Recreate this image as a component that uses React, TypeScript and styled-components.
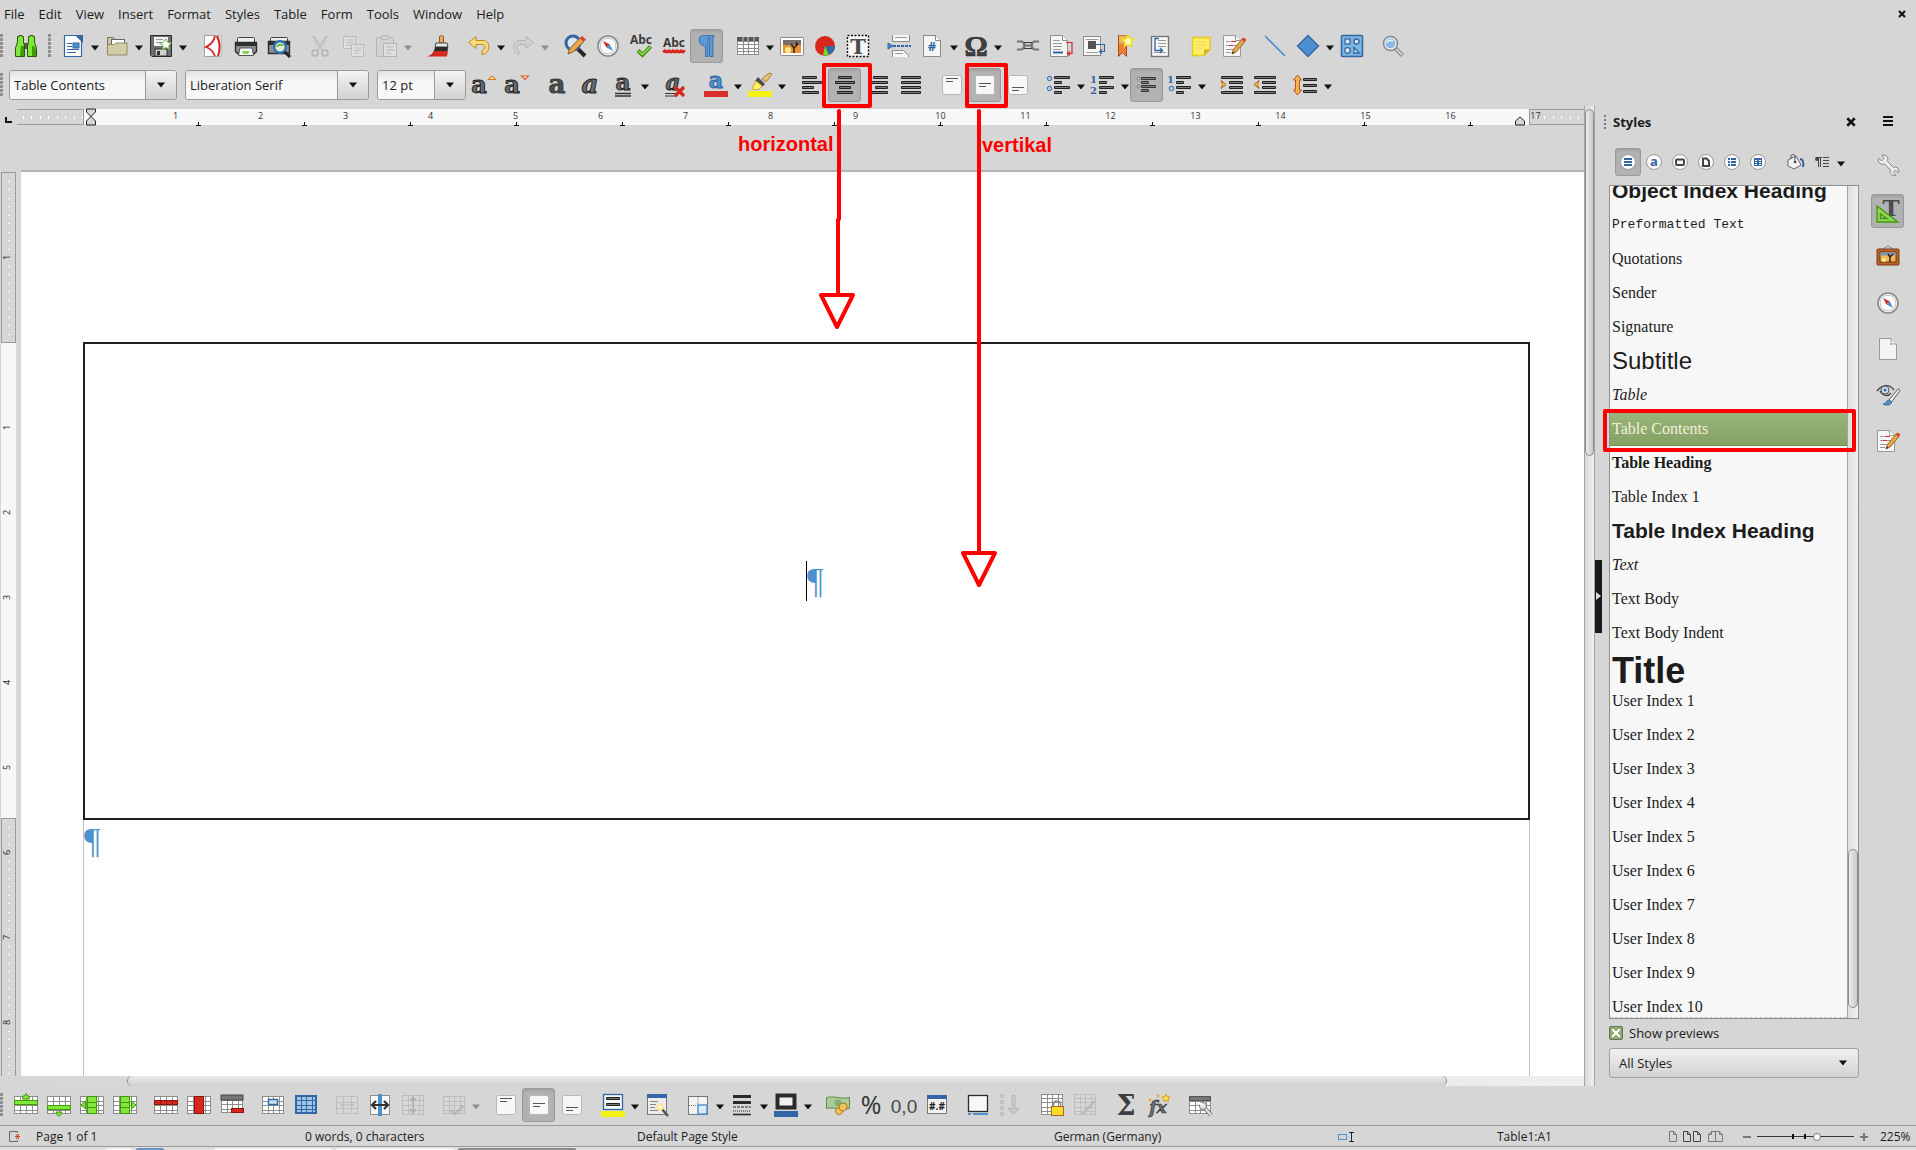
import React from 'react';
import styled, { createGlobalStyle, css } from 'styled-components';

const ui = '"Open Sans", "Noto Sans", sans-serif';
const INK = '#1c1c1c';
const BLUE = '#3465a4';
const SKY = '#4b91cf';

const Global = createGlobalStyle`
  * { box-sizing: border-box; }
  html, body { margin: 0; height: 100%; }
  body { background: #d6d6d6; color: ${INK}; font: 13px/18px ${ui}; overflow: hidden; }
  button, input, select { font: inherit; color: inherit; margin: 0; }
  svg { display: block; flex: none; overflow: visible; }
`;

/* ---------- icons ---------- */

type GridProps = { x?: number; y?: number; w?: number; h?: number; c?: number; r?: number; s?: string; f?: string };
const Grid = ({ x = 0, y = 3, w = 24, h = 18, c = 4, r = 4, s = '#8c8f8a', f = '#fff' }: GridProps) => (
  <g>
    <rect x={x + 0.5} y={y + 0.5} width={w - 1} height={h - 1} fill={f} stroke={s} />
    {Array.from({ length: c - 1 }, (_, i) => {
      const px = Math.round(x + ((i + 1) * w) / c) + 0.5;
      return <path key={'c' + i} d={`M${px} ${y}v${h}`} stroke={s} />;
    })}
    {Array.from({ length: r - 1 }, (_, i) => {
      const py = Math.round(y + ((i + 1) * h) / r) + 0.5;
      return <path key={'r' + i} d={`M${x} ${py}h${w}`} stroke={s} />;
    })}
  </g>
);

const Sheet = ({ x = 3, s = '#8a8a8a' }: { x?: number; s?: string }) => (
  <g>
    <path d={`M${x + 0.5} 1.5h12l5 5v16h-17z`} fill="#f6f6f6" stroke={s} />
    <path d={`M${x + 12.5} 1.5v5h5`} fill="#fff" stroke={s} />
  </g>
);

const Lines = ({ rows, y0 = 3, step = 5 }: { rows: [number, number][]; y0?: number; step?: number }) => (
  <g>
    {rows.map(([x, w], i) => (
      <g key={i}>
        <rect x={x} y={y0 + i * step} width={w} height="3" rx="1" fill="#1f2022" />
        <rect x={x + 1} y={y0 + i * step + 1} width={w - 2} height="1" fill="#77797a" />
      </g>
    ))}
  </g>
);

const VAlign = ({ y }: { y: number }) => (
  <g>
    <rect x="2.5" y="2.5" width="19" height="19" rx="2" fill="#f7f7f7" stroke="#b6b6b6" />
    <path d={`M6 ${y + 0.5}h12M6 ${y + 3.5}h7`} stroke="#555" />
  </g>
);

const Letter = ({ style, weight = 'bold', fill = '#6a6d6f', stroke = '#222', x = 12, y = 20, size = 26 }: {
  style?: string; weight?: string; fill?: string; stroke?: string; x?: number; y?: number; size?: number;
}) => (
  <text x={x} y={y} textAnchor="middle" fontFamily='"DejaVu Serif", serif' fontWeight={weight} fontStyle={style}
    fontSize={size} fill={fill} stroke={stroke} strokeWidth="1">a</text>
);

const Compass = () => (
  <g>
    <circle cx="12" cy="12" r="10" fill="#f4f4f4" stroke="#8a8a8a" strokeWidth="1.6" />
    <circle cx="12" cy="12" r="7.8" fill="#fff" stroke="#c4c4c4" />
    <path d="M7 7l7 3.4-3.6 3.2z" fill="#d32c2c" />
    <path d="M17 17l-6.6-3.4 3.6-3.2z" fill={SKY} />
  </g>
);

const Pencil = () => (
  <g>
    <path d="M10 20l1.5-4.5L20 5l3 2.5L14 18z" fill="#e9a850" stroke="#9a6320" />
    <path d="M19.5 5.5l2-2 3 2.2-2 2.2z" fill="#d8402c" />
    <path d="M10 20l.8-2.4 1.4 1.2z" fill="#222" />
  </g>
);

const TrackIcon = () => (
  <g>
    <Sheet x={1} s="#999" />
    <path d="M4 7.5h4M4 11.5h3M11 11.5h4M4 15.5h7M4 18.5h5" stroke="#999" />
    <path d="M9 7.5h5M7 11.5h4" stroke="#d8302c" />
    <Pencil />
  </g>
);

const Circle = ({ children }: { children: React.ReactNode }) => (
  <g>
    <circle cx="12" cy="12" r="7.5" fill="#fbfbfb" stroke="#9a9a9a" />
    {children}
  </g>
);

const GREEN = '#7fe83a';
const DGREEN = '#3f9a06';

const icons: Record<string, React.ReactNode> = {
  binoculars: (
    <g>
      <rect x="9" y="9" width="6" height="6" fill="#555" />
      <path d="M3.5 8V2.5H5v-1h3v1h1.5V8l1 4v10.500h-9V14z" fill={GREEN} stroke="#2c5a0c" />
      <path d="M14.500 8V2.500H16v-1h3v1h1.500V8l2 6v8.500h-9V12z" fill={GREEN} stroke="#2c5a0c" />
      <path d="M7 12h3v10H6zM18 12h2l2 4v6h-4z" fill={DGREEN} />
    </g>
  ),
  newdoc: (
    <g>
      <path d="M3.500 1.500h12l5 5v16h-17z" fill="#fff" stroke={BLUE} strokeWidth="1.200" />
      <path d="M14 1h8v8z" fill={BLUE} />
      <path d="M6 9.500h5M6 12.500h5M6 15.500h12M6 18.500h9" stroke={BLUE} />
      <rect x="12" y="9" width="6" height="5" fill={SKY} stroke={BLUE} />
    </g>
  ),
  open: (
    <g>
      <path d="M2.500 21V3.500h6l1.500 2h9V10" fill="#c9c6ae" stroke="#77755f" />
      <rect x="6.500" y="5.500" width="13" height="9" fill="#fff" stroke="#666" />
      <path d="M2.500 10.500h7l1.500-1.500h11v12h-19.500z" fill="#d3cda6" stroke="#8d8866" />
    </g>
  ),
  save: (
    <g>
      <path d="M1.500 1.500h21v21H3l-1.500-1.500z" fill="#6d7072" stroke="#26282a" />
      <rect x="5" y="3" width="14" height="9" fill="#f4f4f4" />
      <path d="M7 5.500h7M7 8.500h6" stroke="#999" />
      <rect x="6" y="15" width="12" height="7" fill="#cfcfcf" stroke="#333" />
      <rect x="8" y="17" width="3" height="4" fill="#333" />
      <path d="M17 5l1.800 3.400 3.700.6-2.700 2.600.6 3.800-3.400-1.800-3.400 1.800.6-3.800L10.500 9l3.700-.6z" fill="#fff" stroke="#6fa83c" />
    </g>
  ),
  pdf: (
    <g>
      <path d="M3.500 1.500h17v21h-17z" fill="#fdfdfd" stroke="#a0a0a0" />
      <path d="M14 1.500h6.500v21H18C19 14 18 8 14 1.500z" fill="#dcdcdc" />
      <path d="M14 2c-1 5-5 9-9 11 3 1 7 4 9 9" fill="none" stroke="#d6201c" strokeWidth="1.800" />
      <path d="M16 2c3 6 3 14 1 20" fill="none" stroke="#d6201c" strokeWidth="2" />
    </g>
  ),
  print: (
    <g>
      <rect x="3.500" y="3.500" width="17" height="6" rx="1" fill="#efefef" stroke="#444" />
      <path d="M1.500 8.500h21v9l-2 2h-17l-2-2z" fill="#8d9092" stroke="#2b2d2f" strokeWidth="1.400" />
      <path d="M2 9h20v3H2z" fill="#2f3133" />
      <path d="M6 14h12l1.500 7.500h-15z" fill="#fff" stroke="#555" />
      <path d="M8 17h8l-2 3H9z" fill="#87d55a" />
    </g>
  ),
  preview: (
    <g>
      <rect x="3.500" y="3.500" width="17" height="5" rx="1" fill="#efefef" stroke="#444" />
      <path d="M1.500 7.500h21v12h-21z" fill="#8d9092" stroke="#2b2d2f" strokeWidth="1.400" />
      <path d="M2 8h20v3H2z" fill="#2f3133" />
      <path d="M17 17l6 6" stroke="#222" strokeWidth="3" />
      <circle cx="13" cy="13" r="5.800" fill="#dff1d4" stroke="#2f6fb5" strokeWidth="2.400" />
      <path d="M10 13c1-3 5-3 6-1" stroke="#5faf35" strokeWidth="1.600" fill="none" />
    </g>
  ),
  cut: (
    <g fill="none" stroke="#b3b3b3" strokeWidth="1.600">
      <path d="M5 2l9 14M19 2l-9 14" strokeWidth="2.600" stroke="#c2c2c2" />
      <circle cx="7" cy="19" r="3" /><circle cx="17" cy="19" r="3" />
    </g>
  ),
  copy: (
    <g fill="#dedede" stroke="#bcbcbc">
      <rect x="2.500" y="2.500" width="12" height="12" /><path d="M5 6h7M5 8.500h7M5 11h5" />
      <rect x="10.500" y="10.500" width="12" height="12" /><path d="M13 14h7M13 16.500h7M13 19h5" />
    </g>
  ),
  paste: (
    <g fill="#d2d2d2" stroke="#b4b4b4">
      <rect x="2.500" y="3.500" width="17" height="19" rx="1" /><rect x="7.500" y="1.500" width="7" height="4" rx="1" />
      <rect x="9.500" y="9.500" width="13" height="13" fill="#e0e0e0" /><path d="M12 13h8M12 16h8M12 19h5" />
    </g>
  ),
  brush: (
    <g>
      <path d="M13.500 9V3c0-2 4-2 4 0v6z" fill="#e9ab5b" stroke="#8f5a1e" />
      <path d="M10 9h11l1 4H9z" fill="#e8e8e8" stroke="#444" />
      <path d="M9 13h13l-1 9H3c3-1 5-4 6-9z" fill="#2b2b2b" />
      <path d="M8 17h13.500l-.5 5.500H1c4-1 6-3 7-5.500z" fill="#d8281e" />
    </g>
  ),
  undo: <path d="M9 2.500v4h7c8 0 8 13-1 14v-4c4-1 4-6 0-6H9v4L1.500 8.500z" fill="#f9d978" stroke="#b98a1e" />,
  redo: <path d="M15 2.500v4H9c-8 0-9 12-1 14v-4c-3-1-3-6 1-6h6v4l7.500-6z" fill="#d0d0d0" stroke="#b4b4b4" />,
  find: (
    <g>
      <path d="M15 15l7 7" stroke="#2a2a2a" strokeWidth="4" />
      <circle cx="10" cy="9" r="7" fill="#dde6ee" stroke={BLUE} strokeWidth="3" />
      <path d="M5 20l1.500-5L17 4l4 3.500L10 18z" fill="#e9a850" stroke="#8f5a1e" />
      <path d="M17 4l2-2 4 3.500-2 2z" fill="#d8402c" />
    </g>
  ),
  compass: <Compass />,
  spell: (
    <g>
      <text x="12" y="10" textAnchor="middle" fontFamily={ui} fontWeight="bold" fontSize="12" fill="#3a3a3a">Abc</text>
      <path d="M9 16.500l4.500 4.500 8-8.500" stroke="#3f8f12" strokeWidth="4" fill="none" />
      <path d="M9.500 17l4 3.500 7.500-7.500" stroke="#8fe04a" strokeWidth="1.600" fill="none" />
    </g>
  ),
  autospell: (
    <g>
      <text x="12" y="13" textAnchor="middle" fontFamily={ui} fontWeight="bold" fontSize="12" fill="#3a3a3a">Abc</text>
      <path d="M1 18l2-1.500 2 1.500 2-1.500 2 1.500 2-1.500 2 1.500 2-1.500 2 1.500 2-1.500 2 1.500 2-1.500" stroke="#d8281e" strokeWidth="2.600" fill="none" />
    </g>
  ),
  pilcrow: (
    <path d="M7.500 1.500H19v2h-1v19h-3.500V4H13v18.500h-2.500V12c-8 0-8-10.500-3-10.500z" fill="#5a9bd4" stroke="#2c66a6" strokeWidth="0.800" />
  ),
  table: (
    <g><Grid x={1} w={22} c={4} r={5} /><rect x="1" y="3" width="22" height="4" fill="#55575a" /><path d="M7 3v4M12 3v4M18 3v4" stroke="#ccc" /></g>
  ),
  image: (
    <g>
      <rect x=".5" y="3.500" width="23" height="18" rx="1" fill="#fdfdfd" stroke="#888" />
      <rect x="3" y="6" width="18" height="13" fill="#e2953c" />
      <rect x="3" y="6" width="18" height="5" fill="#77706c" />
      <circle cx="8" cy="16" r="3" fill="#ffe88a" />
      <path d="M14 19v-5l-3-4M14 14l4-4M16 12l1-4" stroke="#2f1a0a" strokeWidth="1.400" fill="none" />
    </g>
  ),
  chart: (
    <g>
      <circle cx="12" cy="12" r="10" fill="#d8281e" />
      <path d="M12 12h10a10 10 0 01-6 9z" fill={BLUE} />
      <path d="M12 12l4 9.500h-6z" fill="#6fdc2a" />
    </g>
  ),
  textbox: (
    <g>
      <rect x="1.500" y="1.500" width="21" height="21" fill="#f7f7f7" stroke="#111" strokeWidth="1.400" strokeDasharray="2 1.500" />
      <text x="12" y="20" textAnchor="middle" fontFamily='"DejaVu Serif", serif' fontWeight="bold" fontSize="21" fill="#4a4c4e">T</text>
    </g>
  ),
  pagebreak: (
    <g>
      <path d="M5.500 1v6.500h17V1M5.500 23v-6.500h11l5 5V23" fill="#f7f7f7" stroke="#8a8a8a" />
      <path d="M8 3.500h12M8 19.500h8" stroke="#999" />
      <path d="M6 12h18" stroke={BLUE} strokeWidth="2" strokeDasharray="3 1" />
      <path d="M1 9l5 3-5 3z" fill={SKY} stroke={BLUE} />
    </g>
  ),
  field: (
    <g><Sheet /><text x="12" y="17" textAnchor="middle" fontFamily={ui} fontSize="13" fontWeight="bold" fill={BLUE}>#</text></g>
  ),
  omega: <text x="12" y="22" textAnchor="middle" fontFamily='"Liberation Serif", serif' fontWeight="bold" fontSize="29" fill="#3f4244" stroke="#222" strokeWidth=".6">Ω</text>,
  link: (
    <g fill="none" stroke="#707376" strokeWidth="2">
      <path d="M1 7.500h5l3 3M23 7.500h-5l-3 3M1 15.500h5l3-3M23 15.500h-5l-3-3M7 11.500h10" />
      <path d="M8 8.500h8M8 14.500h8" stroke="#3a3a3a" strokeWidth="1" />
    </g>
  ),
  footnote: (
    <g>
      <Sheet x={1} /><path d="M4 6.500h7M4 9.500h9M4 12.500h9M4 15.500h8" stroke="#999" />
      <path d="M4 18.500h10" stroke={BLUE} strokeWidth="2" />
      <path d="M17 8.500h6v11h-4m2-2l-2.500 2 2.500 2" fill="none" stroke="#d8281e" strokeWidth="1.200" />
    </g>
  ),
  endnote: (
    <g>
      <rect x="1.500" y="2.500" width="17" height="19" fill="#f7f7f7" stroke="#8a8a8a" />
      <rect x="6" y="7" width="8" height="8" fill="#555" /><path d="M4 5.500h12M4 18.500h12" stroke="#999" />
      <path d="M14 10.500h8.500v7H18m2-2l-2.500 2 2.500 2" fill="none" stroke={BLUE} strokeWidth="1.200" />
    </g>
  ),
  bookmark: (
    <g>
      <path d="M3.500 1.500h8v21l-4-4-4 4z" fill="#ea7f3a" stroke="#b0461c" />
      <path d="M4 1.500h9v8H4z" fill="#e8b75e" />
      <path d="M13 1l1.800 3.700 4.200.6-3 3 .7 4.200-3.700-2-3.700 2 .7-4.200-3-3 4.200-.6z" fill="#fffbb0" stroke="#f2dc14" strokeWidth="1.300" />
    </g>
  ),
  crossref: (
    <g>
      <rect x="3.500" y="2.500" width="17" height="20" fill="#f7f7f7" stroke="#77797b" strokeWidth="1.400" />
      <path d="M10 6.500h8M10 9.500h8M10 12.500h8M6 18.500h12" stroke="#999" />
      <path d="M11 4.500H7v12h7m-2-2.500l2.500 2.500-2.500 2.500" fill="none" stroke={BLUE} strokeWidth="1.400" />
    </g>
  ),
  comment: (
    <g>
      <path d="M3.500 3.500H21v12l-6 6H3.500z" fill="#fdee6a" stroke="#e8c81a" strokeWidth="1.400" />
      <path d="M15 21.500v-6h6z" fill="#d9a92a" />
      <path d="M6 8h12M6 11h12M6 14h8" stroke="#efd64a" />
    </g>
  ),
  track: <TrackIcon />,
  line: <path d="M2 2l20 20" stroke={SKY} strokeWidth="1.600" />,
  diamond: <path d="M12 1.500L22.500 12 12 22.500 1.500 12z" fill={SKY} stroke={BLUE} strokeWidth="1.300" />,
  shapes: (
    <g>
      <rect x="1.500" y="1.500" width="21" height="21" rx="1" fill="#7db4e0" stroke={BLUE} strokeWidth="1.500" />
      <g fill="#d8e9f6" stroke={BLUE} strokeWidth="1.300">
        <rect x="5" y="5" width="5" height="5" /><circle cx="16.500" cy="7.500" r="2.500" />
        <circle cx="7.500" cy="16.500" r="2.800" /><path d="M14 13.500l5.500 5.500H14z" />
      </g>
    </g>
  ),
  zoom: (
    <g>
      <path d="M14.500 14.500l7 7" stroke="#8a8a8a" strokeWidth="4" /><path d="M15 15l6 6" stroke="#e4e4e4" strokeWidth="1.600" />
      <circle cx="9.500" cy="9.500" r="7" fill="#eef4f9" stroke="#8a8a8a" strokeWidth="1.600" />
      <circle cx="9.500" cy="9.500" r="5" fill="#8bbbe3" />
      <path d="M6 9c1-3 4-3 6-2" stroke="#e8f3fb" strokeWidth="1.600" fill="none" />
    </g>
  ),
  grow: <g><Letter x={8} size={24} /><path d="M17.500 6.500L21 3l3.500 3.500z" fill="#fff3d8" stroke="#dd7a20" strokeWidth="1.100" /></g>,
  shrink: <g><Letter x={8} size={24} /><path d="M17.500 3L21 6.500 24.500 3z" fill="#fff3d8" stroke="#d65a2a" strokeWidth="1.100" /></g>,
  bold: <Letter fill="#4a4c4e" stroke="#3a3c3e" />,
  italic: <Letter style="italic" size={26} />,
  underline: <g><Letter y={17} size={23} /><path d="M4 20.500h16M4 23h16" stroke="#333" strokeWidth="1.300" /></g>,
  clear: (
    <g>
      <Letter style="italic" y={17} x={10} size={23} /><path d="M2 20.500h12M2 23h12" stroke="#333" />
      <path d="M12 14l9 9M21 14l-9 9" stroke="#d8281e" strokeWidth="3.200" />
    </g>
  ),
  fontcolor: <g><Letter y={15} size={22} fill={SKY} stroke={BLUE} /><rect x="0" y="18" width="24" height="6" fill="#d8302c" /></g>,
  highlight: (
    <g>
      <path d="M14 6l7-6 3 1-6 8z" fill="#e9c27a" stroke="#a87f30" />
      <path d="M10 4l7 7-3 3-7-6z" fill="#4a4c4e" /><path d="M8 8l6 5-4 4-6-1z" fill="#fff46a" stroke="#d8a51a" />
      <rect x="0" y="18" width="24" height="6" fill="#f7f215" />
    </g>
  ),
  left: <Lines rows={[[2, 15], [2, 20], [2, 12], [2, 17]]} />,
  center: <Lines rows={[[5, 14], [2, 20], [6, 12], [4, 16]]} />,
  right: <Lines rows={[[7, 15], [2, 20], [9, 13], [5, 17]]} />,
  justify: <Lines rows={[[2, 20], [2, 20], [2, 20], [2, 20]]} />,
  vtop: <VAlign y={5} />,
  vmid: <VAlign y={10} />,
  vbot: <VAlign y={14} />,
  bullets: (
    <g>
      <Lines rows={[[7, 16], [7, 8], [7, 16], [7, 8]]} />
      <circle cx="2.500" cy="5.500" r="2.200" fill="#a9cdea" stroke={BLUE} /><circle cx="2.500" cy="15.500" r="2.200" fill="#a9cdea" stroke={BLUE} />
    </g>
  ),
  numbers: (
    <g>
      <Lines rows={[[8, 15], [8, 8], [8, 15], [8, 8]]} />
      <g fontFamily='"DejaVu Serif", serif' fontWeight="bold" fontSize="10" fill={BLUE}><text x="-1" y="10">1</text><text x="-1" y="21">2</text></g>
    </g>
  ),
  nolist: (
    <g opacity=".85">
      <Lines rows={[[6, 15], [6, 8], [6, 15], [6, 8]]} y0={4} step={4} />
      <circle cx="3.500" cy="5.500" r="1.500" fill="#ccc" stroke="#777" /><circle cx="3.500" cy="13.500" r="1.500" fill="#ccc" stroke="#777" />
    </g>
  ),
  outline: (
    <g>
      <Lines rows={[[8, 15], [8, 8], [8, 15], [8, 8]]} />
      <text x="-1" y="10" fontFamily='"DejaVu Serif", serif' fontWeight="bold" fontSize="10" fill={BLUE}>1</text>
      <circle cx="3.500" cy="15.500" r="2.300" fill="#a9cdea" stroke={BLUE} />
    </g>
  ),
  indent: <g><Lines rows={[[1, 22], [9, 14], [9, 14], [1, 22]]} /><path d="M1 7.500l5 4-5 4 1.500-4z" fill="#f0b556" stroke="#b8661c" /></g>,
  outdent: <g><Lines rows={[[1, 22], [9, 14], [9, 14], [1, 22]]} /><path d="M6 7.500l-5 4 5 4-1.500-4z" fill="#f0b556" stroke="#b8661c" /></g>,
  spacing: (
    <g>
      <Lines rows={[[9, 14], [9, 14], [9, 14]]} y0={5} step={6} />
      <path d="M3.500 2l4 5h-2v10h2l-4 5-4-5h2V7h-2z" fill="#f0b556" stroke="#c8501c" />
    </g>
  ),
  rowAbove: <g><Grid /><rect x=".5" y="7.500" width="23" height="4" fill={GREEN} stroke={DGREEN} /><path d="M8.500 6l.5-3h1.500L12 .5 13.500 3H15l.5 3z" fill={GREEN} stroke={DGREEN} /></g>,
  rowBelow: <g><Grid /><rect x=".5" y="12.500" width="23" height="4" fill={GREEN} stroke={DGREEN} /><path d="M9 19h6l-1 2.500-2 2-2-2z" fill={GREEN} stroke={DGREEN} /></g>,
  colBefore: <g><Grid /><rect x="7.500" y="3.500" width="9" height="17" fill={GREEN} stroke={DGREEN} /><path d="M8 9.500h8M8 14.500h8" stroke={DGREEN} /><path d="M5.500 8v8L1 12z" fill={GREEN} stroke={DGREEN} /></g>,
  colAfter: <g><Grid /><rect x="7.500" y="3.500" width="9" height="17" fill={GREEN} stroke={DGREEN} /><path d="M8 9.500h8M8 14.500h8" stroke={DGREEN} /><path d="M18.500 8v8l4.500-4z" fill={GREEN} stroke={DGREEN} /></g>,
  delRow: <g><Grid /><rect x=".5" y="7.500" width="23" height="4" fill="#d8281e" stroke="#8d1510" /><path d="M6.500 7v5M12.500 7v5M18.500 7v5" stroke="#8d1510" /></g>,
  delCol: <g><Grid /><rect x="7.500" y="3.500" width="9" height="17" fill="#d8281e" stroke="#8d1510" /></g>,
  delTable: <g><Grid x={1} w={22} y={2} /><rect x="1" y="2" width="22" height="5" fill="#77777c" stroke="#444" /><rect x="11.500" y="15.500" width="12" height="4" fill="#d8281e" stroke="#8d1510" /></g>,
  selCell: <g><Grid x={1} w={22} /><rect x="7.500" y="6.500" width="9" height="5" fill="#c7def1" stroke={BLUE} strokeWidth="1.400" /></g>,
  selTable: <g><Grid x={1} w={22} y={2} h={19} s={BLUE} f="#9cc6e8" /><rect x="2" y="3" width="20" height="17" fill="none" stroke={BLUE} strokeWidth="2" /></g>,
  merge: <g opacity=".7"><Grid x={1} w={22} s="#b4b4b4" f="#dadada" c={3} r={3} /><path d="M6 12h12M8 9.500L5.500 12 8 14.500M16 9.500l2.500 2.500-2.500 2.500" stroke="#aaa" fill="none" /></g>,
  splitCells: (
    <g>
      <path d="M2 2.500h20M2 21.500h20M2.500 2v20M21.500 2v20" stroke="#8c8f8a" />
      <rect x="3" y="3" width="18" height="18" fill="#f7f7f7" /><rect x="10" y="1" width="4" height="22" fill={SKY} />
      <path d="M4 12h16M8 8l-4 4 4 4M16 8l4 4-4 4" stroke="#333" strokeWidth="2.200" fill="none" />
    </g>
  ),
  splitTable: <g opacity=".7"><Grid x={1} w={22} y={2} h={20} s="#b4b4b4" f="#dadada" /><path d="M12 5v14M9 8l3-4 3 4M9 16l3 4 3-4" stroke="#a0a0a0" strokeWidth="1.600" fill="none" /></g>,
  optimize: <g opacity=".7"><Grid x={1} w={22} s="#b4b4b4" f="#dadada" /><path d="M9 17l4 4 8-8" stroke="#aaa" strokeWidth="2.600" fill="none" /></g>,
  shading: (
    <g>
      <rect x="2.500" y="1.500" width="19" height="15" fill="#f7f7f7" stroke={BLUE} strokeWidth="1.300" />
      <Lines rows={[[5, 14], [5, 14]]} y0={4} step={6} /><rect x="0" y="18" width="24" height="6" fill="#f7f215" />
    </g>
  ),
  autoformat: (
    <g>
      <rect x="2.500" y="1.500" width="19" height="20" fill="#ececec" stroke="#777" /><rect x="2" y="1" width="20" height="4" fill={BLUE} />
      <path d="M5 8.500h8M5 11.500h6M5 14.500h5M5 17.500h8" stroke="#888" /><path d="M16 15l7 8" stroke="#555" strokeWidth="2.600" />
      <circle cx="15" cy="14" r="3.600" fill="#fbe48a" /><circle cx="15" cy="14" r="1.800" fill="#fff" />
    </g>
  ),
  borders: (
    <g>
      <rect x="2.500" y="3.500" width="19" height="18" fill="#f3f3f3" stroke="#777" /><path d="M12 4v8M3 12.500h9" stroke="#777" strokeDasharray="1 1" />
      <rect x="12" y="12" width="9" height="9" fill="#dcebf7" stroke={SKY} strokeWidth="1.400" />
    </g>
  ),
  linestyle: <g stroke="#2a2a2a"><path d="M3 3.500h18M3 9.500h18" strokeWidth="3" /><path d="M3 14h18" strokeDasharray="3 1" /><path d="M3 18h18" strokeDasharray="1 1" /><path d="M3 21.500h18" strokeWidth="1.600" /></g>,
  bordercolor: <g><rect x="3.500" y="2.500" width="17" height="12" fill="#f0f0f0" stroke="#2a2a2a" strokeWidth="4" /><rect x="0" y="18" width="24" height="6" fill={BLUE} /></g>,
  currency: (
    <g>
      <path d="M.5 4.500c8-2 14 2 23 0v11c-9 2-15-2-23 0z" fill="#a9cc98" stroke="#618a50" /><circle cx="12" cy="10" r="3.500" fill="#86b073" />
      <circle cx="13" cy="18" r="3.500" fill="#f3c35c" stroke="#b07a1c" /><circle cx="17" cy="14" r="4" fill="#f3c35c" stroke="#b07a1c" />
    </g>
  ),
  percent: <text x="12" y="21" textAnchor="middle" fontFamily='"Open Sans", sans-serif' fontSize="25" fill="#333">%</text>,
  decimal: <text x="12" y="20" textAnchor="middle" fontFamily='"Liberation Sans", sans-serif' fontSize="19" fill="#4a4a4a">0,0</text>,
  numfmt: (
    <g>
      <rect x="2.500" y="2.500" width="19" height="18" fill="#f3f3f3" stroke="#777" /><rect x="2" y="2" width="20" height="4" fill={BLUE} />
      <text x="12" y="17" textAnchor="middle" fontFamily={ui} fontWeight="bold" fontSize="10" fill="#222">#.#</text>
    </g>
  ),
  caption: <g><rect x="2.500" y="2.500" width="19" height="16" fill="#f7f7f7" stroke="#2a2a2a" strokeWidth="1.300" /><path d="M2 21h3M7 21h15" stroke={SKY} strokeWidth="2" /></g>,
  sort: (
    <g fill="none" stroke="#b4b4b4">
      <circle cx="3" cy="3" r="1.600" /><circle cx="3" cy="9" r="1.600" /><circle cx="3" cy="15" r="1.600" /><circle cx="3" cy="21" r="1.600" />
      <path d="M13 2.500h3v13h4l-5.500 6-5.500-6h4z" fill="#cacaca" />
    </g>
  ),
  protect: (
    <g>
      <Grid x={1} w={22} y={1} h={21} r={5} /><path d="M13.500 14v-3c0-4 7-4 7 0v3" fill="none" stroke="#888" strokeWidth="1.600" />
      <rect x="11.500" y="13.500" width="12" height="9" fill="#f7dc2a" stroke="#b9641c" />
    </g>
  ),
  unprotect: <g opacity=".7"><Grid x={1} w={22} y={1} h={21} r={5} s="#b4b4b4" f="#dadada" /><path d="M9 21l13-13" stroke="#b0b0b0" strokeWidth="3" /></g>,
  sum: <text x="12" y="22" textAnchor="middle" fontFamily='"DejaVu Serif", serif' fontWeight="bold" fontSize="27" fill="#3c3e40">Σ</text>,
  formula: (
    <g>
      <text x="11" y="20" textAnchor="middle" fontFamily='"DejaVu Serif", serif' fontStyle="italic" fontWeight="bold" fontSize="17" fill="#6a6d6f" stroke="#333" strokeWidth=".6">fx</text>
      <path d="M3 5l1.500 2L3 9 1.500 7zM11 1l1.500 2-1.500 2-1.500-2z" fill="#f3a21c" /><path d="M19 1l1 2.500 3 .5-2 2 .5 2.500-2.500-1-2.500 1 .5-2.500-2-2 3-.5z" fill="#fbe04a" stroke="#e39a1c" />
    </g>
  ),
  tableprops: (
    <g>
      <Grid x={1} w={22} y={3} /><rect x="1.500" y="3.500" width="21" height="4" fill="#77777c" stroke="#555" />
      <path d="M16 14l7 8" stroke="#777" strokeWidth="4" /><path d="M16 14l7 8" stroke="#e6e6e6" strokeWidth="2" /><circle cx="15" cy="13" r="3.500" fill="#e6e6e6" stroke="#777" /><path d="M12 10l3 3" stroke="#fff" strokeWidth="2" />
    </g>
  ),
  wrench: (
    <path d="M6 2c4-1 7 3 5.500 6.500l6 6C21 13 24 16 22.500 20l-3-3-2.500 2.500 3 3c-4 1-7-2-5.500-5.500l-6-6C5 12.500 1 9 2.500 5l3 3L8 5.500z" fill="#ececec" stroke="#858585" />
  ),
  stylesTab: (
    <g>
      <text x="15" y="17" textAnchor="middle" fontFamily='"DejaVu Serif", serif' fontWeight="bold" fontSize="23" fill="#4a4c4e">T</text>
      <path d="M1 7v16h21zM4.500 15v4.500H11z" fill="#8fd25e" fillRule="evenodd" stroke={DGREEN} strokeWidth="1.300" />
    </g>
  ),
  gallery: (
    <g>
      <path d="M7 4l5-3 5 3" fill="none" stroke="#888" /><rect x="1" y="4" width="22" height="16" rx="1" fill="#b8642c" stroke="#7a3a12" />
      <rect x="4" y="7" width="16" height="10" fill="#f0b95c" stroke="#6a3410" /><rect x="4.500" y="7.500" width="15" height="3" fill="#7a9cc0" />
      <path d="M14 17v-5l-2-3M14 12l3-3" stroke="#2f1a0a" strokeWidth="1.400" fill="none" /><circle cx="8" cy="15" r="2" fill="#ffe88a" />
    </g>
  ),
  page: (
    <g><path d="M3.500 1.500h11l6 6v15h-17z" fill="#f3f3f3" stroke="#9a9a9a" /><path d="M14.500 1.500c1 2 1 4 0 6 2-1 4-1 6 0" fill="#fff" stroke="#9a9a9a" /></g>
  ),
  inspector: (
    <g>
      <path d="M1 8c5-7 13-7 17-1M4 8c3 5 8 6 11 2" fill="none" stroke="#444" strokeWidth="1.400" /><circle cx="9" cy="7" r="4" fill="#cfe2f3" stroke="#555" /><circle cx="9" cy="7" r="1.500" fill={BLUE} />
      <path d="M22.500 5.500L13 17l2.500 2L24 7.500z" fill="#f3f3f3" stroke="#555" /><path d="M7 21c4 0 3-4 6-4l2.500 2c0 3-5 4-8.500 2z" fill={SKY} stroke={BLUE} />
    </g>
  ),
  sPara: <Circle><path d="M8 9h8M8 12h8M8 15h8" stroke={BLUE} strokeWidth="1.800" /></Circle>,
  sChar: <Circle><text x="12" y="16" textAnchor="middle" fontFamily={ui} fontWeight="bold" fontSize="13" fill={BLUE}>a</text></Circle>,
  sFrame: <Circle><rect x="8" y="9.500" width="8" height="5.500" rx="1" fill="none" stroke="#444" strokeWidth="2" /></Circle>,
  sPage: <Circle><path d="M9 8.500h3.500L15 11v5H9z" fill="none" stroke="#444" strokeWidth="2" /></Circle>,
  sList: <Circle><path d="M8 9h2M8 12h2M8 15h2M11 9h5M11 12h5M11 15h5" stroke={BLUE} strokeWidth="2" /></Circle>,
  sTable: <Circle><rect x="8" y="8" width="8" height="8" fill={BLUE} /><path d="M9 10.500h2M13 10.500h2M9 12.500h2M13 12.500h2M9 14.500h2M13 14.500h2" stroke="#fff" strokeWidth="1" /></Circle>,
  fill: (
    <g>
      <path d="M4 10l8-4 5 9-7 4-6-3z" fill="#f3f3f3" stroke="#666" /><path d="M7 9V6c0-2 4-2 4 0v5" fill="none" stroke="#555" />
      <circle cx="11" cy="12" r="1.300" fill="#444" /><path d="M16 9c3 0 4 4 3 8" fill="none" stroke={BLUE} strokeWidth="2" />
    </g>
  ),
  paraList: (
    <g stroke="#444"><path d="M13 7.500h6M13 10.500h6M13 13.500h6M13 16.500h6" strokeWidth="1.200" /><path d="M8.500 7v10M10.500 7v10M6 7.500h6" fill="none" /><circle cx="7" cy="9" r="2" fill="#444" stroke="none" /></g>
  ),
};

const Icon = ({ name, size = 24 }: { name: string; size?: number }) => (
  <svg width={size} height={size} viewBox="0 0 24 24" aria-hidden="true">{icons[name]}</svg>
);

const Caret = ({ color = '#111' }: { color?: string }) => (
  <svg width="10" height="6" viewBox="0 0 10 6" aria-hidden="true"><path d="M1 0.500h8L5 5.500z" fill={color} /></svg>
);

/* ---------- tool bars ---------- */

const Window = styled.div`
  display: flex;
  flex-direction: column;
  height: 100vh;
  position: relative;
`;

const MenuBar = styled.nav`
  display: flex;
  flex: none;
  gap: 14px;
  height: 28px;
  align-items: center;
  padding: 0 10px 0 4px;
`;

const MenuItem = styled.button`
  border: 0;
  padding: 0;
  background: none;
`;

const CloseButton = styled(MenuItem)`
  margin-left: auto;
`;

const Toolbar = styled.div<{ $h: number }>`
  display: flex;
  flex: none;
  align-items: center;
  height: ${p => p.$h}px;
  padding-bottom: 2px;
`;

const Grip = styled.span<{ $wide?: boolean }>`
  flex: none;
  width: 3px;
  height: 23px;
  margin-right: ${p => (p.$wide ? 6 : 7)}px;
  background: repeating-linear-gradient(#8f8f8f 0 3px, transparent 3px 4px);
`;

const MidGrip = styled(Grip)`
  margin: 0 5px 0 6px;
`;

const ToolButton = styled.button<{ $on?: boolean }>`
  display: flex;
  flex: none;
  align-items: center;
  justify-content: center;
  width: 33px;
  height: 34px;
  padding: 0;
  border: 1px solid transparent;
  border-radius: 3px;
  background: none;
  ${p => p.$on && css`
    border-color: #9a9a9a;
    background: #b2b2b2;
    box-shadow: inset 0 2px 2px #a4a4a4;
  `}
`;

const DropButton = styled.button`
  display: flex;
  flex: none;
  align-items: center;
  justify-content: center;
  width: 11px;
  height: 34px;
  padding: 4px 0 0;
  border: 0;
  background: none;
`;

const Space = styled.span`
  flex: none;
  width: 8px;
`;

type Tool = string;

/* "|" is a group gap; after a colon "v" adds a drop-down arrow, "x" a disabled one, "*" marks a pressed button. */
const Tools = ({ list }: { list: Tool[] }) => (
  <>
    {list.map((t, i) => {
      if (t === '|') return <Space key={i} />;
      const [name, flag = ''] = t.split(':');
      return (
        <React.Fragment key={i}>
          <ToolButton $on={flag.includes('*')} aria-pressed={flag.includes('*')} aria-label={name}><Icon name={name} /></ToolButton>
          {/[vx]/.test(flag) && (
            <DropButton aria-label={name + ' options'}><Caret color={flag.includes('x') ? '#8e8e8e' : '#111'} /></DropButton>
          )}
        </React.Fragment>
      );
    })}
  </>
);

const Combos = styled.div`
  display: flex;
  flex: none;
  gap: 8px;
`;

const Combo = styled.div<{ $w: number }>`
  display: flex;
  flex: none;
  width: ${p => p.$w}px;
  height: 30px;
  border: 1px solid #9a9a9a;
  border-radius: 3px;
  overflow: hidden;
`;

const ComboInput = styled.input`
  flex: 1;
  min-width: 0;
  border: 0;
  padding: 0 4px;
  background: linear-gradient(#e4e4e4, #f7f7f7 40%);
`;

const ComboArrow = styled.button`
  display: flex;
  align-items: center;
  justify-content: center;
  width: 31px;
  padding: 0;
  border: 0;
  border-left: 1px solid #9a9a9a;
  background: linear-gradient(#f4f4f4, #d2d2d2);
`;

/* ---------- editor ---------- */

const Main = styled.main`
  display: flex;
  flex: 1;
  min-height: 0;
`;

const Editor = styled.section`
  display: flex;
  flex: 1;
  flex-direction: column;
  min-width: 0;
`;

const RulerRow = styled.div`
  display: flex;
  flex: none;
  height: 64px;
  padding-top: 3px;
`;

const TabCorner = styled.button`
  width: 17px;
  height: 16px;
  border: 0;
  padding: 6px 0 0 5px;
  background: none;
`;

const Ruler = styled.div`
  position: relative;
  display: flex;
  flex: 1;
  height: 16px;
`;

const OutsideH = styled.div<{ $w: number; $end?: boolean }>`
  width: ${p => p.$w}px;
  border: 1px solid #9a9a9a;
  border-width: ${p => (p.$end ? '1px 0 1px 1px' : '1px 1px 1px 0')};
  background:
    repeating-linear-gradient(90deg, transparent 0 6px, #fff 6px 7px, transparent 7px 14px, #fff 14px 15px, transparent 15px 17px) center / 100% 3px no-repeat;
`;

const InsideH = styled.div`
  flex: 1;
  background: #f7f7f7;
`;

const Numbers = styled.div`
  position: absolute;
  inset: 0;
  display: flex;
  padding-left: 116px;
  overflow: hidden;
  font-size: 9px;
  line-height: 14px;
  color: #333;
`;

const NumberCell = styled.span`
  flex: none;
  width: 85px;
  text-align: center;
`;

const Stops = styled.svg`
  position: absolute;
  left: 67px;
  bottom: -1px;
`;

const Markers = styled.svg<{ $x: 'left' | 'right' }>`
  position: absolute;
  top: -1px;
  ${p => (p.$x === 'left' ? 'left: 69px;' : 'right: 59px;')}
`;

const Canvas = styled.div`
  display: flex;
  flex: 1;
  min-height: 0;
`;

const VRuler = styled.div`
  position: relative;
  display: flex;
  flex: none;
  flex-direction: column;
  width: 16px;
  margin: 2px 5px 0 0;
  padding-left: 1px;
`;

const OutsideV = styled.div<{ $h?: number }>`
  ${p => (p.$h ? `height: ${p.$h}px;` : 'flex: 1;')}
  border: 1px solid #9a9a9a;
  border-bottom-width: ${p => (p.$h ? 1 : 0)}px;
  background:
    repeating-linear-gradient(transparent 0 8px, #fff 8px 9px, transparent 9px 16px, #fff 16px 17px) center / 2px 100% no-repeat;
`;

const InsideV = styled.div`
  height: 475px;
  background: #f7f7f7;
`;

const NumbersV = styled.div`
  position: absolute;
  inset: 43px 0 0 0;
  overflow: hidden;
`;

const NumberCellV = styled.span`
  display: flex;
  align-items: center;
  justify-content: center;
  height: 85px;
  font-size: 9px;
  line-height: 14px;
  writing-mode: vertical-rl;
  transform: rotate(180deg);
`;

const Page = styled.article`
  display: flex;
  flex: 1;
  flex-direction: column;
  min-width: 0;
  padding: 170px 54px 0 62px;
  border-top: 2px solid #b4b4b4;
  background: #fff;
  font: 36px/40px "Liberation Serif", serif;
  color: ${SKY};
`;

const DocTable = styled.table`
  width: 100%;
  height: 478px;
  flex: none;
  border-collapse: collapse;
`;

const Cell = styled.td`
  padding: 0;
  border: 2px solid #1f1f1f;
  vertical-align: middle;
`;

const CenteredMark = styled.p`
  width: 1px;
  margin: 0 auto;
  white-space: nowrap;
  border-left: 1px solid #000;
`;

const TextArea = styled.div`
  flex: 1;
  border: solid #c2c2c2;
  border-width: 0 1px;
`;

const Mark = styled.p`
  margin: 0;
  line-height: 42px;
`;

const HScroll = styled.div`
  display: flex;
  flex: none;
  height: 10px;
  padding: 0 137px 0 106px;
  margin-left: 21px;
  background: linear-gradient(90deg, #d6d6d6, #eee);
`;

const HThumb = styled.div`
  flex: 1;
  border: 1px solid #8e8e8e;
  border-width: 0 1px;
  border-radius: 5px;
  background: linear-gradient(#eaeaea, #cfcfcf);
`;

const VScroll = styled.div`
  flex: none;
  width: 11px;
  padding-top: 3px;
  border: 1px solid #a4a4a4;
  border-width: 0 1px;
  background: linear-gradient(90deg, #d8d8d8, #f0f0f0);
`;

const VThumb = styled.div<{ $h: number }>`
  height: ${p => p.$h}px;
  border: 1px solid #8e8e8e;
  border-radius: 5px;
  background: linear-gradient(90deg, #ececec, #c9c9c9);
`;

/* ---------- side bar ---------- */

const Splitter = styled.div`
  display: flex;
  flex: none;
  align-items: center;
  width: 14px;
`;

const Handle = styled.button`
  display: flex;
  align-items: center;
  width: 7px;
  height: 73px;
  border: 0;
  padding: 0;
  background: #1a1a1a;
`;

const Panel = styled.aside`
  display: flex;
  flex: none;
  flex-direction: column;
  width: 250px;
  padding-bottom: 8px;
`;

const PanelHead = styled.header`
  display: flex;
  align-items: center;
  justify-content: space-between;
  height: 31px;
  padding: 0 3px 0 4px;
  position: relative;
`;

const PanelGrip = styled.span`
  position: absolute;
  left: -5px;
  width: 2px;
  height: 14px;
  background: repeating-linear-gradient(#777 0 2px, transparent 2px 4px);
`;

const PanelTitle = styled.h2`
  margin: 0;
  font-size: 13px;
  line-height: 18px;
`;

const StyleTools = styled.div`
  display: flex;
  align-items: center;
  height: 48px;
  padding: 2px 0 0 6px;
`;

const StyleTool = styled(ToolButton)`
  width: 26px;
  height: 28px;
`;

const StyleGap = styled.span`
  flex: none;
  width: 12px;
`;

const ListFrame = styled.div`
  display: flex;
  flex: 1;
  min-height: 0;
  border: 1px solid #8e8e8e;
  background: #f7f7f7;
`;

const StyleList = styled.ul`
  flex: 1;
  margin: 0;
  padding: 0;
  overflow: hidden;
  border-bottom: 1px dashed #c4c4c4;
  list-style: none;
`;

const faces = {
  serif: css`font: 16px/34px "Liberation Serif", serif;`,
  italic: css`font: italic 16px/34px "Liberation Serif", serif;`,
  strong: css`font: bold 16px/34px "Liberation Serif", serif;`,
  mono: css`font: 13px/34px "Liberation Mono", monospace;`,
  heading: css`font: bold 21px/34px "Liberation Sans", sans-serif;`,
  subtitle: css`font: 24px/34px "Liberation Sans", sans-serif;`,
  title: css`font: bold 36px/42px "Liberation Sans", sans-serif;`,
};

const StyleRow = styled.li<{ $face: keyof typeof faces; $on?: boolean }>`
  height: 34px;
  padding-left: 2px;
  white-space: nowrap;
  ${p => faces[p.$face]}
  &:first-child { margin-top: -12px; }
  ${p => p.$on && css`
    color: #f3efdc;
    border-bottom: 1px solid #71905a;
    background: linear-gradient(#9ab67b, #83a264);
  `}
`;

const ListScroll = styled.div`
  display: flex;
  flex-direction: column;
  justify-content: flex-end;
  width: 11px;
  padding-bottom: 10px;
  border-left: 1px solid #a4a4a4;
  background: linear-gradient(90deg, #dedede, #f0f0f0);
`;

const PreviewLabel = styled.label`
  display: flex;
  align-items: center;
  gap: 6px;
  height: 29px;
  padding-bottom: 2px;
`;

const Check = styled.input`
  appearance: none;
  width: 14px;
  height: 14px;
  border: 1px solid #5f6f50;
  border-radius: 2px;
  background:
    linear-gradient(45deg, transparent 42%, #fff 42% 58%, transparent 58%) center / 8px 8px no-repeat,
    linear-gradient(-45deg, transparent 42%, #fff 42% 58%, transparent 58%) center / 8px 8px no-repeat,
    #8fae70;
`;

const SelectBox = styled.div`
  display: grid;
  align-items: center;
  height: 30px;
  & > * { grid-area: 1 / 1; }
  svg { justify-self: end; margin-right: 11px; pointer-events: none; }
`;

const FilterSelect = styled.select`
  appearance: none;
  width: 100%;
  height: 30px;
  padding: 0 9px;
  border: 1px solid #a0a0a0;
  border-radius: 3px;
  background: linear-gradient(#f0f0f0, #d2d2d2);
`;

const TabRail = styled.nav`
  display: flex;
  flex: none;
  flex-direction: column;
  align-items: center;
  gap: 12px;
  width: 57px;
`;

const MenuButton = styled(ToolButton)`
  height: 30px;
`;

/* ---------- status bar ---------- */

const StatusBar = styled.footer`
  display: grid;
  flex: none;
  grid-template-columns: 36px 269fr 332fr 417fr 284fr 159fr 170fr 249px;
  align-items: center;
  height: 22px;
  padding-top: 1px;
  border: 1px solid #9a9a9a;
  border-width: 1px 0;
  font-size: 12px;
  white-space: nowrap;
`;

const StatusIcon = styled.span`
  padding-left: 9px;
`;

const ZoomArea = styled.div`
  display: flex;
  align-items: center;
`;

const ZoomStep = styled.button`
  display: flex;
  width: 20px;
  justify-content: center;
  border: 0;
  padding: 0;
  background: none;
`;

const ZoomTrack = styled.input`
  appearance: none;
  width: 97px;
  height: 12px;
  margin: 0;
  background:
    linear-gradient(#111, #111) 35px 50% / 2px 5px no-repeat,
    linear-gradient(#111, #111) 47px 50% / 2px 5px no-repeat,
    linear-gradient(#333, #333) center / 100% 1px no-repeat;
  &::-webkit-slider-thumb {
    appearance: none;
    width: 8px;
    height: 8px;
    border: 1px solid #777;
    border-radius: 50%;
    background: #fff;
  }
`;

const PageIcons = styled.div`
  display: flex;
  width: 70px;
`;

const ZoomValue = styled.span`
  margin-left: 6px;
`;

const Taskbar = styled.div`
  display: flex;
  flex: none;
  gap: 4px;
  height: 3px;
  padding: 1px 0 0 106px;
  background: #dedede;
`;

const Task = styled.span<{ $w: number; $c: string }>`
  width: ${p => p.$w}px;
  border-radius: 2px 2px 0 0;
  background: ${p => p.$c};
`;

/* ---------- annotations ---------- */

const Notes = styled.svg`
  position: absolute;
  inset: 0;
  pointer-events: none;
`;

const Note = styled.span<{ $x: number; $y: number }>`
  position: absolute;
  left: ${p => p.$x}px;
  top: ${p => p.$y}px;
  color: #f00;
  font: bold 20px/22px "Liberation Sans", sans-serif;
`;

const menus = ['File', 'Edit', 'View', 'Insert', 'Format', 'Styles', 'Table', 'Form', 'Tools', 'Window', 'Help'];

const standard = [
  'newdoc:v', 'open:v', 'save:v', '|', 'pdf', 'print', 'preview', '|', 'cut', 'copy', 'paste:x', '|', 'brush', '|',
  'undo:v', 'redo:x', '|', 'find', 'compass', 'spell', 'autospell', 'pilcrow:*', '|', 'table:v', 'image', 'chart', 'textbox', '|',
  'pagebreak', 'field:v', 'omega:v', '|', 'link', 'footnote', 'endnote', 'bookmark', 'crossref', '|', 'comment', 'track', '|',
  'line', 'diamond:v', 'shapes', '|', 'zoom',
];

const formatting = [
  'grow', 'shrink', '|', 'bold', 'italic', 'underline:v', '|', 'clear', '|', 'fontcolor:v', 'highlight:v', '|',
  'left', 'center:*', 'right', 'justify', '|', 'vtop', 'vmid:*', 'vbot', '|', 'bullets:v', 'numbers:v', 'nolist:*', 'outline:v', '|',
  'indent', 'outdent', '|', 'spacing:v',
];

const tableTools = [
  'rowAbove', 'rowBelow', 'colBefore', 'colAfter', '|', 'delRow', 'delCol', 'delTable', '|', 'selCell', 'selTable', '|',
  'merge', 'splitCells', 'splitTable', '|', 'optimize:x', '|', 'vtop', 'vmid:*', 'vbot', '|', 'shading:v', 'autoformat', '|',
  'borders:v', 'linestyle:v', 'bordercolor:v', '|', 'currency', 'percent', 'decimal', 'numfmt', '|', 'caption', 'sort', '|',
  'protect', 'unprotect', '|', 'sum', 'formula', '|', 'tableprops',
];

const styleRows: [string, keyof typeof faces][] = [
  ['Object Index Heading', 'heading'], ['Preformatted Text', 'mono'], ['Quotations', 'serif'], ['Sender', 'serif'],
  ['Signature', 'serif'], ['Subtitle', 'subtitle'], ['Table', 'italic'], ['Table Contents', 'serif'], ['Table Heading', 'strong'],
  ['Table Index 1', 'serif'], ['Table Index Heading', 'heading'], ['Text', 'italic'], ['Text Body', 'serif'],
  ['Text Body Indent', 'serif'], ['Title', 'title'],
  ...Array.from({ length: 10 }, (_, i): [string, 'serif'] => [`User Index ${i + 1}`, 'serif']),
];

const combos: [string, string, number][] = [
  ['Paragraph style', 'Table Contents', 168], ['Font name', 'Liberation Serif', 184], ['Font size', '12 pt', 89],
];

const Cross = ({ s = 8 }: { s?: number }) => (
  <svg width={s} height={s} viewBox="0 0 8 8"><path d="M1 1l6 6M7 1L1 7" stroke="#111" strokeWidth="2" /></svg>
);

export default function App() {
  return (
    <Window>
      <Global />
      <MenuBar>
        {menus.map(m => <MenuItem key={m}>{m}</MenuItem>)}
        <CloseButton aria-label="Close document"><Cross /></CloseButton>
      </MenuBar>

      <Toolbar $h={37}>
        <Grip $wide />
        <ToolButton aria-label="Find"><Icon name="binoculars" /></ToolButton>
        <MidGrip />
        <Tools list={standard} />
      </Toolbar>

      <Toolbar $h={41}>
        <Grip $wide />
        <Combos>
          {combos.map(([label, value, w]) => (
            <Combo key={label} $w={w}>
              <ComboInput aria-label={label} defaultValue={value} />
              <ComboArrow aria-label={label + ' list'}><Caret /></ComboArrow>
            </Combo>
          ))}
        </Combos>
        <Tools list={formatting} />
      </Toolbar>

      <Main>
        <Editor>
          <RulerRow>
            <TabCorner aria-label="Tab type">
              <svg width="7" height="6" viewBox="0 0 7 6"><path d="M1 0v5h6" fill="none" stroke="#111" strokeWidth="2" /></svg>
            </TabCorner>
            <Ruler>
              <OutsideH $w={67} />
              <InsideH />
              <OutsideH $w={55} $end />
              <Numbers>
                {Array.from({ length: 17 }, (_, i) => <NumberCell key={i}>{i + 1}</NumberCell>)}
              </Numbers>
              <Stops width="1400" height="4" viewBox="0 0 1400 4">
                {Array.from({ length: 13 }, (_, i) => <path key={i} d={`M${112 + i * 106} 3.500h5m-2.500 0v-3.500`} stroke="#111" />)}
              </Stops>
              <Markers $x="left" width="10" height="18" viewBox="0 0 10 18">
                <path d="M.5 1h9v3L.5 13v4h9v-4L.5 4z" fill="#d6d6d6" stroke="#222" />
              </Markers>
              <Markers $x="right" width="10" height="18" viewBox="0 0 10 18">
                <path d="M.5 17v-4L5 9l4.500 4v4z" fill="#d6d6d6" stroke="#222" />
              </Markers>
            </Ruler>
          </RulerRow>
          <Canvas>
            <VRuler>
              <OutsideV $h={171} />
              <InsideV />
              <OutsideV />
              <NumbersV>
                {['1', '', '1', '2', '3', '4', '5', '6', '7', '8'].map((n, i) => <NumberCellV key={i}>{n}</NumberCellV>)}
              </NumbersV>
            </VRuler>
            <Page>
              <DocTable>
                <tbody>
                  <tr><Cell><CenteredMark>¶</CenteredMark></Cell></tr>
                </tbody>
              </DocTable>
              <TextArea><Mark>¶</Mark></TextArea>
            </Page>
          </Canvas>
          <HScroll><HThumb /></HScroll>
        </Editor>
        <VScroll><VThumb $h={347} /></VScroll>
        <Splitter>
          <Handle aria-label="Collapse side bar">
            <svg width="6" height="8" viewBox="0 0 6 8"><path d="M1 0l5 4-5 4z" fill="#ddd" /></svg>
          </Handle>
        </Splitter>
        <Panel>
          <PanelHead>
            <PanelGrip />
            <PanelTitle>Styles</PanelTitle>
            <MenuItem aria-label="Close side bar"><Cross s={10} /></MenuItem>
          </PanelHead>
          <StyleTools>
            {['sPara', 'sChar', 'sFrame', 'sPage', 'sList', 'sTable'].map((n, i) => (
              <StyleTool key={n} $on={i === 0} aria-label={n}><Icon name={n} /></StyleTool>
            ))}
            <StyleGap />
            <StyleTool aria-label="Fill format"><Icon name="fill" /></StyleTool>
            <StyleTool aria-label="Style actions"><Icon name="paraList" /></StyleTool>
            <DropButton aria-label="Style actions list"><Caret /></DropButton>
          </StyleTools>
          <ListFrame>
            <StyleList role="listbox" aria-label="Paragraph styles">
              {styleRows.map(([name, face]) => (
                <StyleRow key={name} role="option" aria-selected={name === 'Table Contents'} $face={face} $on={name === 'Table Contents'}>
                  {name}
                </StyleRow>
              ))}
            </StyleList>
            <ListScroll><VThumb $h={159} /></ListScroll>
          </ListFrame>
          <PreviewLabel><Check type="checkbox" defaultChecked />Show previews</PreviewLabel>
          <SelectBox>
            <FilterSelect aria-label="Style filter"><option>All Styles</option></FilterSelect>
            <Caret />
          </SelectBox>
        </Panel>
        <TabRail>
          <MenuButton aria-label="Side bar settings">
            <svg width="10" height="10" viewBox="0 0 10 10"><path d="M0 1h10M0 5h10M0 9h10" stroke="#111" strokeWidth="2" /></svg>
          </MenuButton>
          {['wrench', 'stylesTab', 'gallery', 'compass', 'page', 'inspector', 'track'].map(n => (
            <ToolButton key={n} $on={n === 'stylesTab'} aria-label={n}><Icon name={n} /></ToolButton>
          ))}
        </TabRail>
      </Main>

      <Toolbar $h={39}>
        <Grip $wide />
        <Tools list={tableTools} />
      </Toolbar>

      <StatusBar>
        <StatusIcon>
          <svg width="12" height="12" viewBox="0 0 12 12">
            <path d="M8.500 2V.5H.5v10h8V9" fill="none" stroke="#666" /><path d="M6 5.500h5M7.200 3l2.600 5M9.800 3L7.200 8" stroke="#d8401e" />
          </svg>
        </StatusIcon>
        <span>Page 1 of 1</span>
        <span>0 words, 0 characters</span>
        <span>Default Page Style</span>
        <span>German (Germany)</span>
        <svg width="18" height="12" viewBox="0 0 18 12">
          <rect x=".5" y="3.500" width="8" height="5" fill="none" stroke={SKY} /><path d="M11 1.500h5M11 10.500h5M13.500 1.500v9" stroke="#222" />
        </svg>
        <span>Table1:A1</span>
        <ZoomArea>
          <PageIcons>
            <svg width="58" height="11" viewBox="0 0 58 11" fill="none" stroke="#777">
              <path d="M2.500.5h4l3 3v7h-7zM6.500.5v3h3" />
              <path d="M16.500.5h4l3 3v7h-7zM20.500.5v3h3M26.500.5h4l3 3v7h-7zM30.500.5v3h3" stroke="#444" />
              <path d="M48.500 10.500h-7v-7l3-3h4zM48.500.5h4l3 3v7h-7zM52.500.5v3h3M44.500.5v3h-3" />
            </svg>
          </PageIcons>
          <ZoomStep aria-label="Zoom out"><svg width="8" height="8" viewBox="0 0 8 8"><path d="M0 4h8" stroke="#777" strokeWidth="2" /></svg></ZoomStep>
          <ZoomTrack type="range" aria-label="Zoom" min={0} max={100} defaultValue={63} />
          <ZoomStep aria-label="Zoom in"><svg width="8" height="8" viewBox="0 0 8 8"><path d="M0 4h8M4 0v8" stroke="#777" strokeWidth="2" /></svg></ZoomStep>
          <ZoomValue>225%</ZoomValue>
        </ZoomArea>
      </StatusBar>
      <Taskbar>
        <Task $w={26} $c="#f3f3f3" /><Task $w={28} $c="#6b93c4" /><Task $w={42} $c="#dedede" />
        <Task $w={118} $c="#f3f3f3" /><Task $w={118} $c="#f3f3f3" /><Task $w={118} $c="#8a8a8a" />
      </Taskbar>

      <Notes width="1916" height="620" fill="none" stroke="#f00" strokeWidth="4" strokeLinejoin="round">
        <rect x="824" y="65" width="46" height="41" />
        <rect x="967" y="65" width="39" height="41" />
        <rect x="1605" y="411" width="249" height="39" />
        <path d="M839 111v108l-1 1v74M821 295h32l-16 32z" strokeLinecap="round" />
        <path d="M979 111v441M963 553h32l-16 32z" strokeLinecap="round" />
      </Notes>
      <Note $x={738} $y={133}>horizontal</Note>
      <Note $x={982} $y={134}>vertikal</Note>
    </Window>
  );
}
